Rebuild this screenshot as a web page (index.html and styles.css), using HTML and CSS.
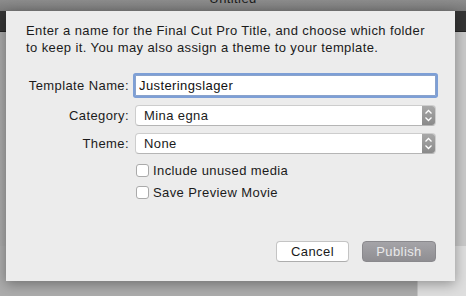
FILE: index.html
```html
<!DOCTYPE html>
<html lang="en">

<head>
    <meta charset="UTF-8">
    <title>Publish Template</title>
    <link rel="stylesheet" href="styles.css">
</head>

<body>
    <div class="window">
        <div class="titlebar"><span class="title">Untitled</span></div>
        <div class="toolbar"></div>
        <div class="workspace">
            <div class="pane-left"></div>
            <div class="pane-right"></div>
            <div class="pane-bottom"></div>
            <div class="pane-light"></div>
        </div>
    </div>

    <div class="sheet">
        <p class="intro">Enter a name for the Final Cut Pro Title, and choose which folder to keep it. You may also assign a theme to your template.</p>

        <div class="form">
            <label class="label">Template Name:</label>
            <div class="field"><input class="textInput" type="text" value="Justeringslager"></div>

            <label class="label row2">Category:</label>
            <div class="field row2">
                <div class="popup"><span>Mina egna</span><span class="stepper"></span></div>
            </div>

            <label class="label row3">Theme:</label>
            <div class="field row3">
                <div class="popup"><span>None</span><span class="stepper"></span></div>
            </div>

            <div class="field checks">
                <div class="check"><span class="box"></span>Include unused media</div>
                <div class="check"><span class="box"></span>Save Preview Movie</div>
            </div>
        </div>

        <div class="buttons">
            <button class="btn cancel">Cancel</button>
            <button class="btn publish">Publish</button>
        </div>
    </div>
</body>

</html>
```

FILE: styles.css
```css
html,
body {
    margin: 0;
    height: 100%;
}

body {
    width: 466px;
    height: 296px;
    overflow: hidden;
    position: relative;
    font-family: "Liberation Sans", Arial, sans-serif;
    font-size: 13px;
    letter-spacing: 0.4px;
    color: #1b1b1b;
}

.window {
    display: flex;
    flex-direction: column;
    height: 100%;
}

.titlebar {
    height: 11px;
    background: linear-gradient(to bottom, #8c8c8c, #7b7b7b);
    display: flex;
    justify-content: center;
    align-items: flex-end;
    overflow: hidden;
}

.title {
    font-size: 13px;
    line-height: 13px;
    margin-bottom: 6px;
    color: #1a1a1a;
}

.toolbar {
    height: 20px;
    background: #353535;
    border-bottom: 1px solid #222;
}

.workspace {
    flex: 1;
    display: grid;
    grid-template-columns: 417px 1fr;
    grid-template-rows: 214px 1fr;
}

.pane-left {
    background: linear-gradient(to right, #a9a9a9, #9a9a9a);
}

.pane-right {
    background: #c9c9c9;
    border-left: 1px solid #9e9e9e;
}

.pane-bottom {
    background: #acacac;
}

.pane-light {
    background: #dedede;
    border-left: 1px solid #c4c4c4;
}

/* sheet dialog */
.sheet {
    position: absolute;
    left: 6px;
    top: 11px;
    width: 449px;
    height: 270px;
    box-sizing: border-box;
    padding: 11px 19px 0 20px;
    background: #ececec;
    box-shadow: 0 3px 12px rgba(0, 0, 0, 0.35);
    display: flex;
    flex-direction: column;
}

.intro {
    margin: 0;
    line-height: 17px;
}

.form {
    margin-top: 19px;
    display: grid;
    grid-template-columns: 103px 301px;
    column-gap: 6px;
}

.label {
    text-align: right;
    line-height: 21px;
    height: 21px;
}

.row2 {
    margin-top: 9px;
}

.row3 {
    margin-top: 7px;
}

.field {
    height: 21px;
}

.textInput {
    box-sizing: border-box;
    width: 301px;
    height: 21px;
    margin: 0;
    padding: 0 3px;
    border: 1px solid #8aa3cc;
    font: 13px "Liberation Sans", Arial, sans-serif;
    letter-spacing: 0.4px;
    color: #111;
    background: #fff;
    outline: none;
    box-shadow: 0 0 0 2px #7d9fd6;
    border-radius: 1px;
}

.popup {
    box-sizing: border-box;
    height: 21px;
    background: #fff;
    border: 1px solid #cdcdcd;
    border-bottom-color: #b5b5b5;
    border-radius: 4px;
    display: flex;
    align-items: center;
    justify-content: space-between;
    padding-left: 8px;
    overflow: hidden;
}

.stepper {
    width: 13px;
    height: 100%;
    background:
        url("data:image/svg+xml;utf8,<svg xmlns='http://www.w3.org/2000/svg' width='13' height='19'><path d='M3.5 7.5 L6.5 4.5 L9.5 7.5 M3.5 11.5 L6.5 14.5 L9.5 11.5' fill='none' stroke='white' stroke-width='1.3'/></svg>") center no-repeat,
        linear-gradient(to bottom, #a8a8a8, #8a8a8a);
}

.checks {
    grid-column: 2;
    height: auto;
    margin-top: 5px;
    padding-left: 1px;
}

.check {
    height: 22px;
    display: flex;
    align-items: center;
    gap: 4px;
}

.box {
    width: 11px;
    height: 11px;
    background: #fff;
    border: 1px solid #aaa;
    border-radius: 3px;
}

.buttons {
    margin-top: 38px;
    display: flex;
    justify-content: flex-end;
    gap: 13px;
}

.btn {
    box-sizing: border-box;
    height: 21px;
    width: 73px;
    padding: 0;
    font: 13px "Liberation Sans", Arial, sans-serif;
    letter-spacing: 0.4px;
    border-radius: 4px;
}

.cancel {
    background: #fff;
    border: 1px solid #c4c4c4;
    border-bottom-color: #adadad;
    color: #1a1a1a;
}

.publish {
    width: 74px;
    background: linear-gradient(to bottom, #a5a4a8, #8f8e92);
    border: 1px solid #8a898d;
    color: #e9e9ea;
}
```
